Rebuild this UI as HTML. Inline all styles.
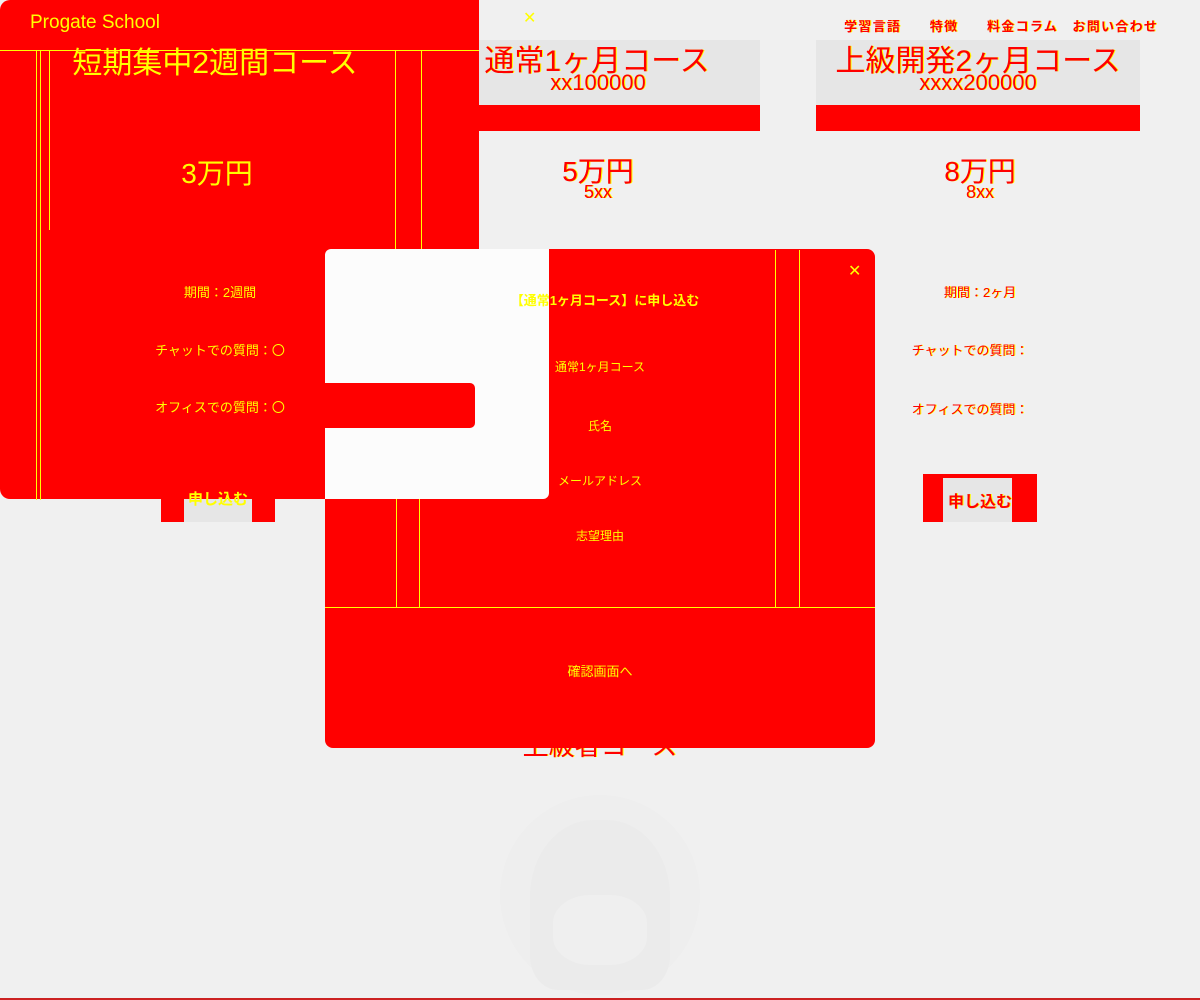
<!DOCTYPE html>
<html><head><meta charset="utf-8"><style>
*{margin:0;padding:0;box-sizing:border-box}
body{width:1200px;height:1000px;background:#f0f0f0;position:relative;overflow:hidden;font-family:"Liberation Sans","Noto Sans CJK JP",sans-serif}
.a{position:absolute}
.r{background:#ff0000}
.y{color:#ffff00}
.t{color:#ff0000;text-shadow:1px 0 0 #ffff00}
.c{text-align:center;white-space:nowrap}
.vl{position:absolute;width:1px;background:#ffff00}
</style></head><body>
<!-- nav -->
<div class="a t" style="left:844px;top:16px;font-size:13px;font-weight:bold;white-space:nowrap;letter-spacing:1.3px">学習言語　　特徴　　料金コラム　お問い合わせ</div>
<!-- card 2 -->
<div class="a" style="left:420px;top:40px;width:340px;height:65px;background:#e6e6e6"></div>
<div class="a r" style="left:420px;top:105px;width:340px;height:26px"></div>
<div class="a t c" style="left:447px;top:36px;width:300px;font-size:30px">通常1ヶ月コース</div>
<div class="a t c" style="left:498px;top:70px;width:200px;font-size:22px">xx100000</div>
<div class="a t c" style="left:498px;top:150px;width:200px;font-size:28px">5万円</div>
<div class="a t c" style="left:498px;top:182px;width:200px;font-size:18px">5xx</div>
<!-- card 3 -->
<div class="a" style="left:816px;top:40px;width:324px;height:65px;background:#e6e6e6"></div>
<div class="a r" style="left:816px;top:105px;width:324px;height:26px"></div>
<div class="a t c" style="left:816px;top:36px;width:324px;font-size:30px">上級開発2ヶ月コース</div>
<div class="a t c" style="left:816px;top:70px;width:324px;font-size:22px">xxxx200000</div>
<div class="a t c" style="left:880px;top:150px;width:200px;font-size:28px">8万円</div>
<div class="a t c" style="left:880px;top:182px;width:200px;font-size:18px">8xx</div>
<div class="a t c" style="left:880px;top:282px;width:200px;font-size:13px">期間：2ヶ月</div>
<div class="a t c" style="left:870px;top:340px;width:200px;font-size:13px">チャットでの質問：</div>
<div class="a t c" style="left:870px;top:399px;width:200px;font-size:13px">オフィスでの質問：</div>
<div class="a r" style="left:923px;top:474px;width:114px;height:48px"></div>
<div class="a" style="left:943px;top:478px;width:69px;height:44px;background:#e6e6e6"></div>
<div class="a t c" style="left:923px;top:488px;width:114px;font-size:16px;font-weight:bold">申し込む</div>
<!-- left button -->
<div class="a r" style="left:161px;top:490px;width:114px;height:32px"></div>
<div class="a" style="left:184px;top:499px;width:68px;height:23px;background:#e6e6e6"></div>
<!-- left red panel -->
<div class="a r" style="left:0;top:0;width:549px;height:499px;border-radius:10px"></div>
<div class="a" style="left:479px;top:0;width:80px;height:249px;background:#f0f0f0"></div>
<div class="a" style="left:479px;top:40px;width:281px;height:65px;background:#e6e6e6"></div>
<div class="a r" style="left:479px;top:105px;width:281px;height:26px"></div>
<div class="a t c" style="left:447px;top:36px;width:300px;font-size:30px;clip-path:inset(0 0 0 32px)">通常1ヶ月コース</div>
<div class="a t c" style="left:498px;top:70px;width:200px;font-size:22px">xx100000</div>
<div class="a t c" style="left:498px;top:150px;width:200px;font-size:28px">5万円</div>
<div class="a t c" style="left:498px;top:182px;width:200px;font-size:18px">5xx</div>
<div class="vl" style="left:36px;top:50px;height:450px"></div>
<div class="vl" style="left:40px;top:50px;height:450px"></div>
<div class="vl" style="left:49px;top:50px;height:180px"></div>
<div class="vl" style="left:395px;top:50px;height:450px"></div>
<div class="vl" style="left:421px;top:50px;height:200px"></div>
<div class="a" style="left:0;top:50px;width:479px;height:1px;background:#ffff00"></div>
<div class="a y" style="left:30px;top:12px;font-size:19px">Progate School</div>
<div class="a y" style="left:523px;top:8px;font-size:16px">✕</div>
<div class="a y c" style="left:30px;top:38px;width:370px;font-size:30px">短期集中2週間コース</div>
<div class="a y c" style="left:117px;top:152px;width:200px;font-size:28px">3万円</div>
<div class="a y c" style="left:40px;top:282px;width:360px;font-size:13px">期間：2週間</div>
<div class="a y c" style="left:40px;top:340px;width:360px;font-size:13px">チャットでの質問：〇</div>
<div class="a y c" style="left:40px;top:397px;width:360px;font-size:13px">オフィスでの質問：〇</div>
<div class="a y c" style="left:160px;top:488px;width:116px;font-size:15px;font-weight:bold">申し込む</div>
<!-- modal -->
<div class="a r" style="left:325px;top:249px;width:550px;height:499px;border-radius:8px"></div>
<div class="vl" style="left:396px;top:250px;height:358px"></div>
<div class="vl" style="left:419px;top:250px;height:358px"></div>
<div class="vl" style="left:775px;top:250px;height:358px"></div>
<div class="vl" style="left:799px;top:250px;height:358px"></div>
<div class="a" style="left:325px;top:249px;width:224px;height:250px;background:#fcfcfc;border-radius:6px 0 6px 0"></div>
<div class="a r" style="left:325px;top:383px;width:150px;height:45px;border-radius:0 5px 5px 0"></div>
<div class="a" style="left:325px;top:607px;width:550px;height:1px;background:#ffff00"></div>
<div class="a y" style="left:848px;top:261px;font-size:16px">✕</div>
<div class="a y c" style="left:420px;top:290px;width:370px;font-size:13px;font-weight:bold">【通常1ヶ月コース】に申し込む</div>
<div class="a y c" style="left:420px;top:358px;width:360px;font-size:12px">通常1ヶ月コース</div>
<div class="a y c" style="left:420px;top:417px;width:360px;font-size:12px">氏名</div>
<div class="a y c" style="left:420px;top:472px;width:360px;font-size:12px">メールアドレス</div>
<div class="a y c" style="left:420px;top:527px;width:360px;font-size:12px">志望理由</div>
<div class="a y c" style="left:420px;top:661px;width:360px;font-size:13px">確認画面へ</div>
<div class="a t c" style="left:500px;top:726px;width:200px;font-size:26px;clip-path:inset(22px 0 0 0)">上級者コース</div>
<!-- mascot -->
<div class="a" style="left:500px;top:795px;width:200px;height:200px;border-radius:50%;background:#eeeeee"></div>
<div class="a" style="left:530px;top:820px;width:140px;height:170px;border-radius:45% 45% 20% 20%;background:#ebebeb"></div>
<div class="a" style="left:553px;top:895px;width:94px;height:70px;border-radius:40%;background:#efefef"></div>
<div class="a" style="left:0;top:998px;width:1200px;height:2px;background:#cc2222"></div>
</body></html>
